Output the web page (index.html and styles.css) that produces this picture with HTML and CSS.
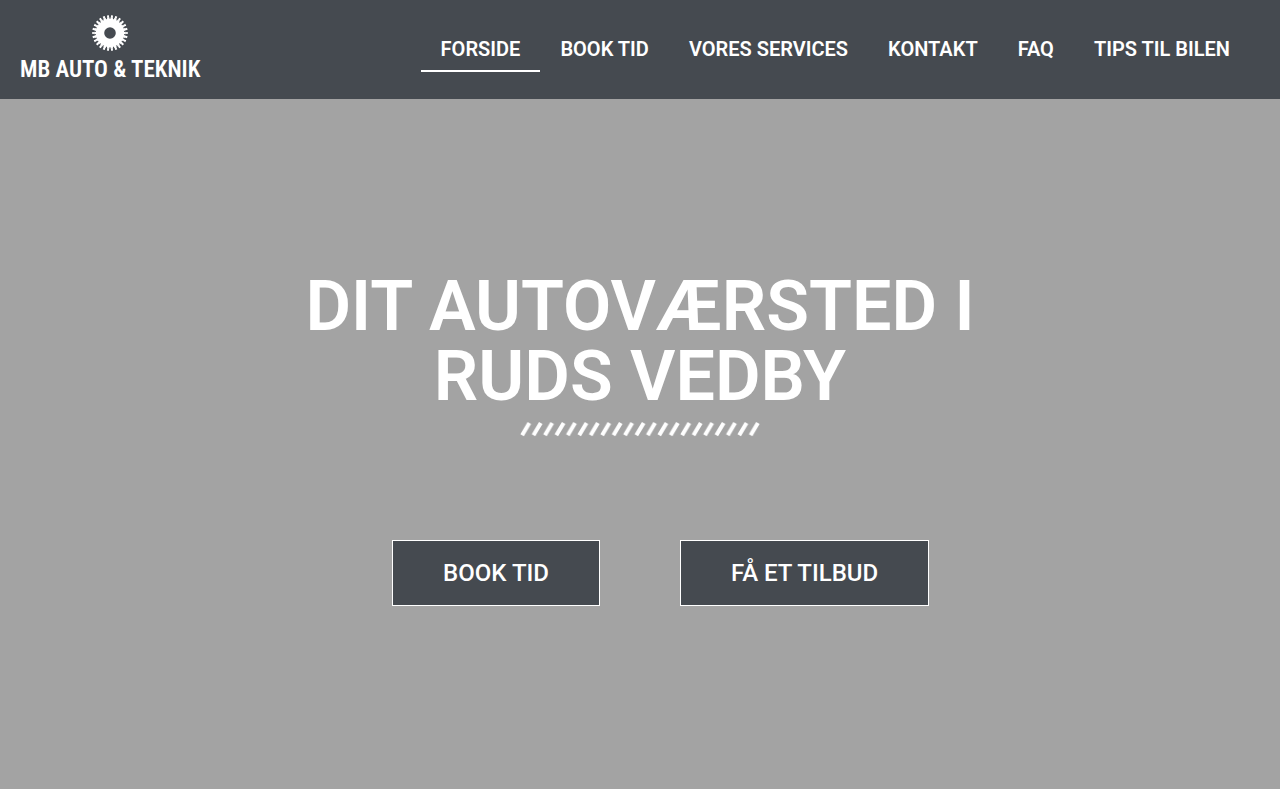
FILE: index.html
```html
<!DOCTYPE html>
<html lang="da">

<head>
    <meta charset="utf-8" />
    <meta name="viewport" content="width=device-width, initial-scale=1.0" />
    <title>MB Auto &amp; Teknik</title>
    <link rel="stylesheet" href="styles.css">
</head>

<body>
    <header class="site-header">
        <a class="logo" href="#">
            <svg class="logo-gear" viewBox="0 0 36 36" aria-hidden="true">
                <circle cx="18" cy="18" r="10" fill="none" stroke="#fff" stroke-width="8.4" />
                <!-- teeth, wide at the root and narrow at the tip -->
                <g fill="none" stroke="#fff">
                    <circle cx="18" cy="18" r="14.6" stroke-width="2" pathLength="52" stroke-dasharray="1.4 0.6" stroke-dashoffset="0.7" />
                    <circle cx="18" cy="18" r="16.5" stroke-width="2.6" pathLength="52" stroke-dasharray="1 1" stroke-dashoffset="0.5" />
                </g>
            </svg>
            <span class="logo-text">MB AUTO &amp; TEKNIK</span>
        </a>
        <nav>
            <ul class="menu">
                <li><a class="active" href="#">FORSIDE</a></li>
                <li><a href="#book">BOOK TID</a></li>
                <li><a href="#services">VORES SERVICES</a></li>
                <li><a href="#kontakt">KONTAKT</a></li>
                <li><a href="#faq">FAQ</a></li>
                <li><a href="#tips">TIPS TIL BILEN</a></li>
            </ul>
        </nav>
    </header>

    <main class="hero">
        <h1>DIT AUTOVÆRSTED I RUDS VEDBY</h1>
        <svg class="divider" viewBox="0 0 252 16.8" aria-hidden="true">
            <defs>
                <pattern id="slashes" width="12" height="16.8" patternUnits="userSpaceOnUse">
                    <path d="M2.2 15L9.8 2" stroke="#fff" stroke-width="4.2" />
                </pattern>
            </defs>
            <rect width="252" height="16.8" fill="url(#slashes)" />
        </svg>
        <div class="hero-buttons">
            <a class="button" href="#book">BOOK TID</a>
            <a class="button" href="#tilbud">FÅ ET TILBUD</a>
        </div>
    </main>
</body>

</html>
```
FILE: styles.css
```css
* {
    box-sizing: border-box;
}

body {
    margin: 0;
    background: #fff;
    color: #fff;
    font-family: Roboto, sans-serif;
}

a {
    color: inherit;
    text-decoration: none;
}

.site-header {
    display: flex;
    justify-content: space-between;
    align-items: center;
    padding: 0 30px 0 20px;
    background: #454a50;
}

.logo {
    display: flex;
    flex-direction: column;
    align-items: center;
    padding: 15px 0 10px;
}

.logo-gear {
    width: 36px;
    height: 36px;
}

.logo-text {
    font-family: "Roboto Condensed", "Liberation Sans Narrow", "Liberation Sans", sans-serif;
    font-size: 23px;
    font-weight: 600;
    line-height: 38px;
    white-space: nowrap;
}

.menu {
    display: flex;
    margin: 0;
    padding: 0 0 1px;
    list-style: none;
}

.menu a {
    display: block;
    padding: 13px 20px 11px;
    border-bottom: 2px solid transparent;
    font-size: 20px;
    font-weight: 600;
    line-height: 20px;
}

.menu a.active {
    border-bottom-color: #fff;
}

.hero {
    display: flex;
    flex-direction: column;
    align-items: center;
    padding: 172px 20px 183px;
    background: #a3a3a3;
}

.hero h1 {
    max-width: 760px;
    margin: 0;
    font-size: 70px;
    font-weight: 600;
    line-height: 70px;
    text-align: center;
}

.divider {
    width: 240px;
    height: 16px;
    margin-top: 10px;
}

.hero-buttons {
    display: grid;
    grid-template-columns: 1fr 1fr;
    gap: 80px;
    width: 100%;
    margin-top: 103px;
}

.button {
    justify-self: start;
    padding: 20px 50px;
    border: 1px solid #fff;
    background: #454a50;
    font-size: 24px;
    font-weight: 500;
    line-height: 24px;
}

.button:first-child {
    justify-self: end;
}
```
